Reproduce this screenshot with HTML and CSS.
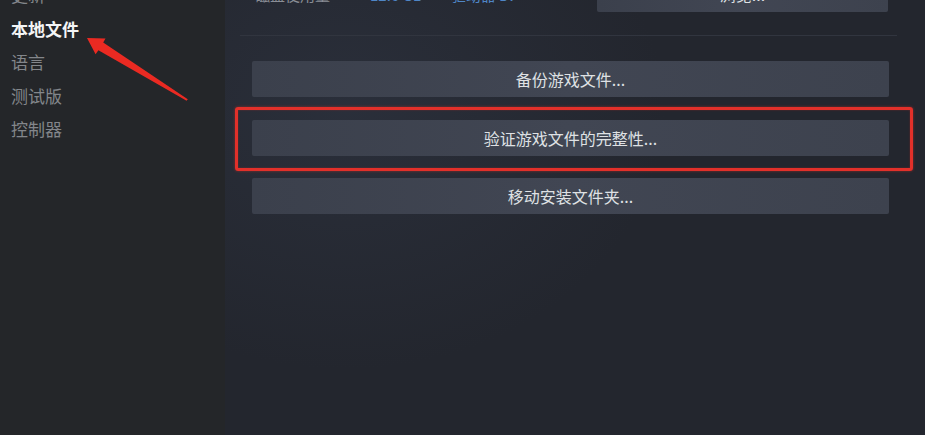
FILE: index.html
```html
<!DOCTYPE html>
<html lang="zh-CN">
<head>
<meta charset="utf-8">
<title>属性 - 本地文件</title>
<link rel="stylesheet" href="styles.css">
</head>
<body>
<div class="window">
  <aside class="sidebar">
    <div class="nav-item">更新</div>
    <div class="nav-item active">本地文件</div>
    <div class="nav-item">语言</div>
    <div class="nav-item">测试版</div>
    <div class="nav-item">控制器</div>
  </aside>
  <main class="pane">
    <div class="info-row">
      <span class="label">磁盘使用量</span>
      <span class="link">12.6 GB</span>
      <span class="link">驱动器 D:</span>
      <button class="btn browse">浏览...</button>
    </div>
    <div class="sep"></div>
    <div class="actions">
      <button class="btn">备份游戏文件...</button>
      <button class="btn highlight">验证游戏文件的完整性...</button>
      <button class="btn">移动安装文件夹...</button>
    </div>
  </main>
  <svg class="arrow" width="925" height="435" viewBox="0 0 925 435" aria-hidden="true">
    <defs>
      <filter id="soft" x="-10%" y="-10%" width="120%" height="120%">
        <feGaussianBlur stdDeviation="0.6"/>
      </filter>
    </defs>
    <polygon filter="url(#soft)" fill="#ea2a22"
      points="87,38 105.5,38.6 103.2,42.4 187.8,99.2 186.6,100.8 98.4,50.2 95.6,54.2"/>
  </svg>
</div>
</body>
</html>
```
FILE: styles.css
```css
* { box-sizing: border-box; }

html, body {
  margin: 0;
  padding: 0;
  width: 925px;
  height: 435px;
  overflow: hidden;
  background: #23262d;
  font-family: "Noto Sans CJK SC", "Noto Sans", "Liberation Sans", sans-serif;
}

.window {
  position: relative;
  display: flex;
  width: 925px;
  height: 435px;
  overflow: hidden;
}

.sidebar {
  width: 225px;
  flex: none;
  background: #242629;
  padding-left: 11px;
  display: flex;
  flex-direction: column;
}

.nav-item {
  height: 33.5px;
  line-height: 33.5px;
  font-size: 17px;
  color: #83868b;
  white-space: nowrap;
}

.nav-item:first-child {
  margin-top: -22px;
}

.nav-item.active {
  color: #f4f5f6;
  font-weight: 700;
}

.pane {
  flex: 1;
  background:
    radial-gradient(ellipse 320px 260px at 120px 110px, rgba(48, 54, 68, 0.55), rgba(48, 54, 68, 0) 100%),
    #23262e;
  padding: 0 36px 0 27px;
  display: flex;
  flex-direction: column;
}

.info-row {
  display: flex;
  align-items: center;
  height: 36px;
  margin-top: -24px;
  font-size: 15px;
}

.label {
  color: #8a8e96;
  padding-left: 3px;
  width: 118px;
}

.link {
  color: #4f86c6;
  margin-right: 28px;
}

.btn {
  display: flex;
  align-items: center;
  justify-content: center;
  height: 36px;
  border: none;
  border-radius: 2px;
  background: linear-gradient(90deg, #3b404c 0%, #414653 50%, #3d424e 100%);
  color: #dfe1e4;
  font-family: inherit;
  font-size: 16px;
  padding: 0;
}

.browse {
  margin-left: auto;
  width: 291px;
  margin-right: 1px;
}

.sep {
  height: 1px;
  background: #31353f;
  margin: 23px -8px 0 -12px;
}

.actions {
  margin-top: 25px;
  display: flex;
  flex-direction: column;
  gap: 22.5px;
}

.actions .btn {
  width: 100%;
}

.highlight {
  position: relative;
}

.highlight::after {
  content: "";
  position: absolute;
  top: -13px;
  left: -17px;
  right: -24px;
  bottom: -15px;
  border: 3px solid #e2302a;
  border-radius: 3px;
  box-shadow: 0 0 3px rgba(255, 50, 40, 0.45), inset 0 0 2px rgba(255, 50, 40, 0.35);
  pointer-events: none;
}

.arrow {
  position: absolute;
  left: 0;
  top: 0;
  pointer-events: none;
}
```
